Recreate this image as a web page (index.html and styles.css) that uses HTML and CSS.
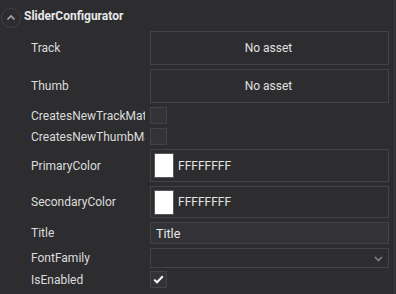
FILE: index.html
```html
<!DOCTYPE html>
<html>
<head>
<meta charset="utf-8">
<link rel="stylesheet" href="styles.css">
</head>
<body>
<div class="panel">
  <div class="header">
    <span class="collapse">
      <svg width="20" height="20" viewBox="0 0 20 20"><circle cx="10" cy="10" r="9.5" fill="none" stroke="#434346"/><path d="M6.5 11.5 L10 8 L13.5 11.5" fill="none" stroke="#a8a8a8" stroke-width="1.6"/></svg>
    </span>
    <span class="title">SliderConfigurator</span>
  </div>
  <div class="rows">
    <div class="row r-asset"><div class="label">Track</div><div class="value asset">No asset</div></div>
    <div class="row r-asset"><div class="label">Thumb</div><div class="value asset">No asset</div></div>
    <div class="row r-check"><div class="label">CreatesNewTrackMaterial</div><div class="value"><span class="check"></span></div></div>
    <div class="row r-check"><div class="label">CreatesNewThumbMaterial</div><div class="value"><span class="check"></span></div></div>
    <div class="row r-color"><div class="label">PrimaryColor</div><div class="value color"><span class="swatch"></span><span class="hex">FFFFFFFF</span></div></div>
    <div class="row r-color2"><div class="label">SecondaryColor</div><div class="value color"><span class="swatch"></span><span class="hex">FFFFFFFF</span></div></div>
    <div class="row r-text"><div class="label">Title</div><div class="value textbox">Title</div></div>
    <div class="row r-drop"><div class="label">FontFamily</div><div class="value dropdown"><svg width="9" height="6" viewBox="0 0 9 6"><path d="M1 1 L4.5 4.5 L8 1" fill="none" stroke="#8a8a8a" stroke-width="1.4"/></svg></div></div>
    <div class="row r-check last"><div class="label">IsEnabled</div><div class="value"><span class="check on"><svg width="11" height="9" viewBox="0 0 11 9"><path d="M1.2 4.6 L4 7.3 L9.8 1.3" fill="none" stroke="#ffffff" stroke-width="2"/></svg></span></div></div>
  </div>
</div>
</body>
</html>
```
FILE: styles.css
```css
html, body {
  margin: 0;
  padding: 0;
  background: #2d2d30;
}
body {
  font-family: Roboto, "Liberation Sans", sans-serif;
  font-size: 12px;
  color: #dedede;
  width: 396px;
  height: 294px;
  overflow: hidden;
}
.panel {
  width: 394px;
  height: 294px;
  border-right: 1px solid #3b3b3f;
  box-sizing: content-box;
}
.header {
  height: 31px;
  display: flex;
  align-items: center;
  padding-top: 4px;
  box-sizing: border-box;
}
.collapse {
  display: flex;
  width: 20px;
  height: 20px;
  margin-left: 1px;
}
.title {
  font-weight: bold;
  font-size: 12px;
  margin-left: 3px;
  color: #e8e8e8;
  margin-top: -3px;
}
.rows {
  display: flex;
  flex-direction: column;
  gap: 4px;
}
.row {
  display: flex;
  align-items: stretch;
}
.label {
  width: 114px;
  margin-left: 31px;
  margin-right: 5px;
  white-space: nowrap;
  overflow: hidden;
  display: flex;
  align-items: center;
  color: #dcdcdc;
}
.value {
  width: 239px;
  box-sizing: border-box;
  display: flex;
  align-items: center;
}
.r-asset { height: 34px; }
.r-check { height: 17px; }
.r-color { height: 33px; }
.r-color2 { height: 32px; }
.r-text { height: 22px; }
.r-drop { height: 20px; }
.last { margin-top: -1px; }
.asset {
  border: 1px solid #434346;
  justify-content: center;
  color: #e0e0e0;
  padding-right: 2px;
}
.check {
  width: 17px;
  height: 17px;
  box-sizing: border-box;
  border: 1px solid #434346;
  background: #333337;
  display: flex;
  align-items: center;
  justify-content: center;
}
.color {
  border: 1px solid #434346;
  padding-left: 3px;
}
.swatch {
  width: 20px;
  height: 25px;
  box-sizing: border-box;
  background: #ffffff;
  border: 1px solid #5a5a5e;
}
.hex {
  margin-left: 4px;
  font-size: 12px;
  color: #e4e4e4;
}
.textbox {
  border: 1px solid #434346;
  background: #333337;
  padding-left: 5px;
  font-size: 12.5px;
  color: #e8e8e8;
}
.dropdown {
  border: 1px solid #434346;
  justify-content: flex-end;
  padding-right: 5px;
  padding-top: 2px;
}
```
